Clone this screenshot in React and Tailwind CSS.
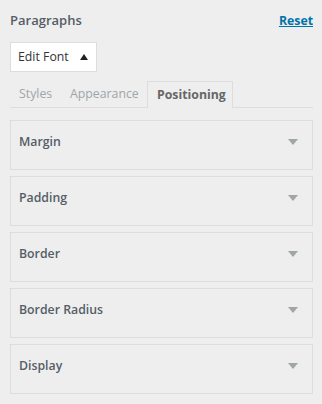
import React from "react";

const Arrow = () => (
  <svg width="10" height="6" viewBox="0 0 10 6" className="block">
    <path d="M0 0 L10 0 L5 6 Z" fill="#a0a5aa" />
  </svg>
);

const Panel = ({ label }) => (
  <div className="h-[50px] border border-[#dddddd] flex items-start justify-between pl-[8px] pr-[14px] pt-[11px]">
    <span className="text-[12.3px] font-semibold text-[#555d66] leading-[20px]">{label}</span>
    <span className="mt-[7px]"><Arrow /></span>
  </div>
);

export default function App() {
  return (
    <div
      className="w-[322px] h-[404px] bg-[#eeeeee] px-[9px] pt-[9px]"
      style={{ fontFamily: '"Open Sans", "Noto Sans", sans-serif' }}
    >
      <div className="flex items-center justify-between h-[24px] pl-[1px]">
        <span className="text-[13px] font-semibold text-[#555d66]">Paragraphs</span>
        <a className="text-[12.3px] font-bold text-[#0073aa] underline">Reset</a>
      </div>
      <div className="mt-[9px] pl-[1px] flex">
        <div className="flex items-center h-[30px] w-[87px] bg-white border border-[#dddddd] pl-[7px] text-[12.3px] text-[#333333]">
          <span>Edit Font</span>
          <svg width="8" height="6" viewBox="0 0 8 6" className="ml-[11px] block">
            <path d="M0 6 L8 6 L4 0 Z" fill="#222222" />
          </svg>
        </div>
      </div>
      <div className="mt-[10px] ml-[1px] flex items-end border-b border-[#dddddd] h-[26px]">
        <span className="w-[50px] pl-[9px] text-[12.3px] text-[#a0a5aa] leading-[26px]">Styles</span>
        <span className="w-[87px] pl-[10px] text-[12.3px] text-[#a0a5aa] leading-[26px]">Appearance</span>
        <span className="w-[86px] pl-[9px] h-[27px] -mb-px border border-b-0 border-[#dddddd] bg-[#eeeeee] text-[12.3px] font-bold text-[#666666] leading-[26px]">Positioning</span>
      </div>
      <div className="mt-[12px] ml-[1px] flex flex-col gap-[6px]">
        <Panel label="Margin" />
        <Panel label="Padding" />
        <Panel label="Border" />
        <Panel label="Border Radius" />
        <Panel label="Display" />
      </div>
    </div>
  );
}
